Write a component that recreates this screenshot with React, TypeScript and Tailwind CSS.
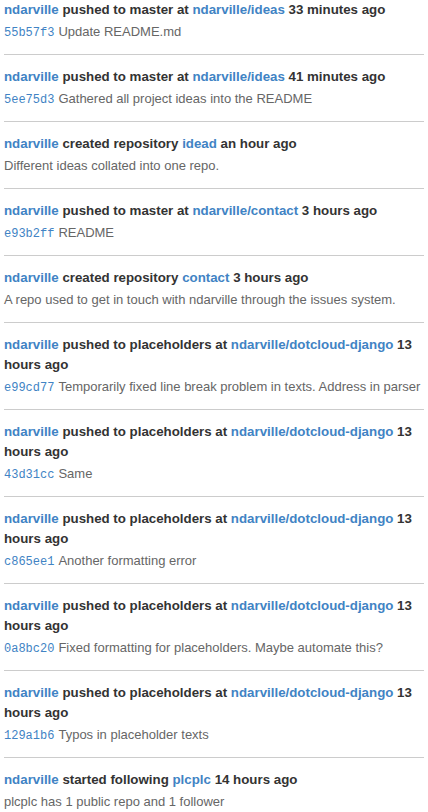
import React from 'react';

type Item = {
  action: string;
  target: string;
  when: string;
  hash?: string;
  text: string;
};

const items: Item[] = [
  { action: 'pushed to master at', target: 'ndarville/ideas', when: '33 minutes ago', hash: '55b57f3', text: 'Update README.md' },
  { action: 'pushed to master at', target: 'ndarville/ideas', when: '41 minutes ago', hash: '5ee75d3', text: 'Gathered all project ideas into the README' },
  { action: 'created repository', target: 'idead', when: 'an hour ago', text: 'Different ideas collated into one repo.' },
  { action: 'pushed to master at', target: 'ndarville/contact', when: '3 hours ago', hash: 'e93b2ff', text: 'README' },
  { action: 'created repository', target: 'contact', when: '3 hours ago', text: 'A repo used to get in touch with ndarville through the issues system.' },
  { action: 'pushed to placeholders at', target: 'ndarville/dotcloud-django', when: '13 hours ago', hash: 'e99cd77', text: 'Temporarily fixed line break problem in texts. Address in parser' },
  { action: 'pushed to placeholders at', target: 'ndarville/dotcloud-django', when: '13 hours ago', hash: '43d31cc', text: 'Same' },
  { action: 'pushed to placeholders at', target: 'ndarville/dotcloud-django', when: '13 hours ago', hash: 'c865ee1', text: 'Another formatting error' },
  { action: 'pushed to placeholders at', target: 'ndarville/dotcloud-django', when: '13 hours ago', hash: '0a8bc20', text: 'Fixed formatting for placeholders. Maybe automate this?' },
  { action: 'pushed to placeholders at', target: 'ndarville/dotcloud-django', when: '13 hours ago', hash: '129a1b6', text: 'Typos in placeholder texts' },
  { action: 'started following', target: 'plcplc', when: '14 hours ago', text: 'plcplc has 1 public repo and 1 follower' },
];

export default function App() {
  return (
    <div className="bg-white px-1 font-['Liberation_Sans',Arial,sans-serif]">
      {items.map((it, i) => (
        <div
          key={i}
          className={`${i === 0 ? 'pt-0' : 'pt-3'} pb-3 ${i < items.length - 1 ? 'border-b border-[#cccccc]' : ''}`}
        >
          <div className="text-[13.3px] leading-[20px] font-bold text-[#333333]">
            <a className="text-[#4183c4]">ndarville</a> {it.action}{' '}
            <a className="text-[#4183c4]">{it.target}</a> {it.when}
          </div>
          <div className="mt-[2px] flex h-5 items-baseline gap-[4px] whitespace-nowrap text-[13px] leading-[20px] text-[#666666]">
            {it.hash && (
              <code className="font-['Liberation_Mono',monospace] text-[12px] text-[#4183c4]">{it.hash}</code>
            )}
            <span>{it.text}</span>
          </div>
        </div>
      ))}
    </div>
  );
}
